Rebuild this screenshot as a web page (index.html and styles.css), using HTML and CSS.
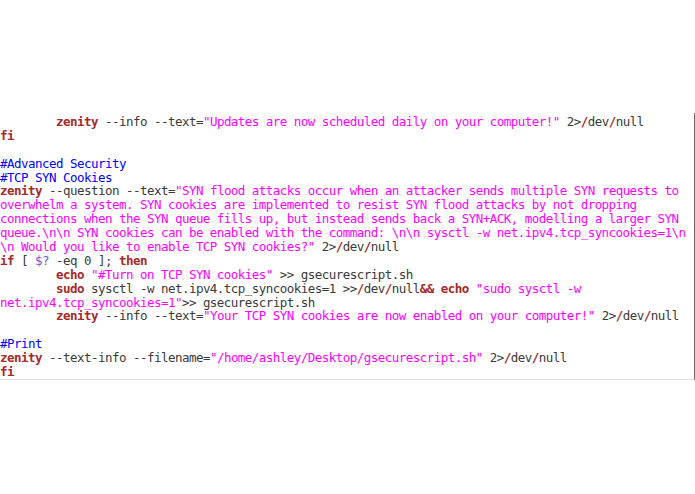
FILE: index.html
```html
<!DOCTYPE html>
<html>
<head>
<meta charset="utf-8">
<link rel="stylesheet" href="styles.css">
</head>
<body>
<div class="page">
<div class="spacer"></div>
<pre class="code"><span class="line">        <b class="kw">zenity</b> --info --text=<span class="str">"Updates are now scheduled daily on your computer!"</span> 2&gt;<b class="kw">/</b>dev<b class="kw">/</b>null</span>
<span class="line"><b class="kw">fi</b></span>
<span class="line"></span>
<span class="line"><span class="cm">#Advanced Security</span></span>
<span class="line"><span class="cm">#TCP SYN Cookies</span></span>
<span class="line"><b class="kw">zenity</b> --question --text=<span class="str">"SYN flood attacks occur when an attacker sends multiple SYN requests to</span></span>
<span class="line"><span class="str">overwhelm a system. SYN cookies are implemented to resist SYN flood attacks by not dropping</span></span>
<span class="line"><span class="str">connections when the SYN queue fills up, but instead sends back a SYN+ACK, modelling a larger SYN</span></span>
<span class="line"><span class="str">queue.\n\n SYN cookies can be enabled with the command: \n\n sysctl -w net.ipv4.tcp_syncookies=1\n</span></span>
<span class="line"><span class="str">\n Would you like to enable TCP SYN cookies?"</span> 2&gt;<b class="kw">/</b>dev<b class="kw">/</b>null</span>
<span class="line"><b class="kw">if</b> [ <span class="var">$?</span> -eq 0 ]; <b class="kw">then</b></span>
<span class="line">        <b class="kw">echo</b> <span class="str">"#Turn on TCP SYN cookies"</span> &gt;&gt; gsecurescript.sh</span>
<span class="line">        <b class="kw">sudo</b> sysctl -w net.ipv4.tcp_syncookies=1 &gt;&gt;<b class="kw">/</b>dev<b class="kw">/</b>null<b class="kw">&amp;&amp;</b> <b class="kw">echo</b> <span class="str">"sudo sysctl -w</span></span>
<span class="line"><span class="str">net.ipv4.tcp_syncookies=1"</span>&gt;&gt; gsecurescript.sh</span>
<span class="line">        <b class="kw">zenity</b> --info --text=<span class="str">"Your TCP SYN cookies are now enabled on your computer!"</span> 2&gt;<b class="kw">/</b>dev<b class="kw">/</b>null</span>
<span class="line"></span>
<span class="line"><span class="cm">#Print</span></span>
<span class="line"><b class="kw">zenity</b> --text-info --filename=<span class="str">"/home/ashley/Desktop/gsecurescript.sh"</span> 2&gt;<b class="kw">/</b>dev<b class="kw">/</b>null</span>
<span class="line"><b class="kw">fi</b></span></pre>
</div>
</body>
</html>
```
FILE: styles.css
```css
html, body {
  margin: 0;
  padding: 0;
  background: #ffffff;
}
.page {
  width: 695px;
  height: 494px;
  background: #ffffff;
}
.spacer {
  height: 113px;
}
.code {
  margin: 0;
  width: 694px;
  padding-top: 2px;
  border-right: 1px solid #6b6b6b;
  border-bottom: 1px solid #dcdcdc;
  font-family: "DejaVu Sans Mono", monospace;
  font-size: 12.5px;
  letter-spacing: -0.53px;
  line-height: 13.9px;
  color: #3a3a3a;
  white-space: pre;
  display: flex;
  flex-direction: column;
}
.line {
  display: block;
  height: 13.9px;
}
.kw {
  color: #a52a2a;
  font-weight: bold;
}
.str {
  color: #ff00ff;
}
.cm {
  color: #0000ff;
}
.var {
  color: #6a5acd;
}
```
